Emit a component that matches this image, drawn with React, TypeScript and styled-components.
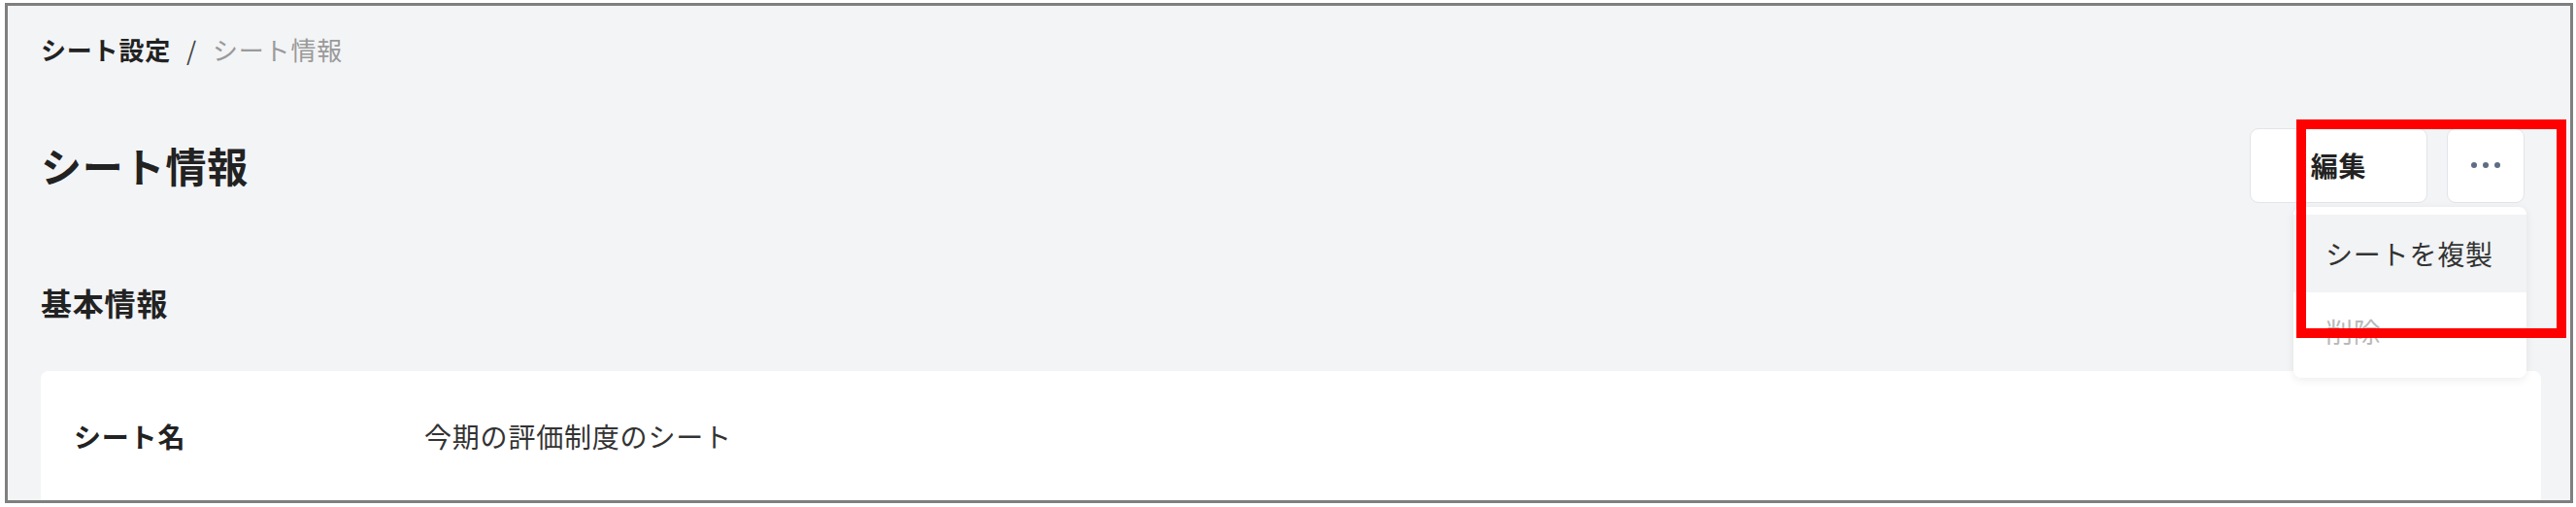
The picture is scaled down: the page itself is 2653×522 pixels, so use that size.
import React from "react";
import styled, { createGlobalStyle } from "styled-components";

type Field = {
  label: string;
  value: string;
};

type MenuItem = {
  title: string;
  disabled?: boolean;
};

const fields: Field[] = [{ label: "シート名", value: "今期の評価制度のシート" }];

const menu: MenuItem[] = [
  { title: "シートを複製" },
  { title: "削除", disabled: true },
];

const App = () => {
  return (
    <>
      <GlobalStyle />
      <Frame>
        <Page>
          <Breadcrumb>
            <Crumb>シート設定</Crumb>
            <Separator>/</Separator>
            <Crumb current>シート情報</Crumb>
          </Breadcrumb>

          <Header>
            <Title>シート情報</Title>
            <Actions>
              <Button wide>編集</Button>
              <Button>
                <Dot />
                <Dot />
                <Dot />
              </Button>
              <Menu>
                {menu.map((el, i) => (
                  <MenuRow key={i} active={i === 0} disabled={el.disabled}>
                    {el.title}
                  </MenuRow>
                ))}
              </Menu>
              <Highlight />
            </Actions>
          </Header>

          <SectionTitle>基本情報</SectionTitle>

          <Card>
            {fields.map((el, i) => (
              <Row key={i}>
                <Label>{el.label}</Label>
                <Value>{el.value}</Value>
              </Row>
            ))}
          </Card>
        </Page>
      </Frame>
    </>
  );
};

export default App;

const GlobalStyle = createGlobalStyle`
  html, body {
    margin: 0;
    padding: 0;
    background: #fff;
  }
  body {
    font-family: "Noto Sans CJK JP", "Noto Sans", sans-serif;
    color: #222;
    letter-spacing: 0.05em;
  }
  * {
    box-sizing: border-box;
  }
`;

const Frame = styled.div`
  margin: 3px 3px 4px 5px;
  height: 515px;
  border: 3px solid #7f7f7f;
  background: #f3f4f6;
  overflow: hidden;
`;

const Page = styled.div`
  padding: 27px 30px 0 34px;
`;

const Breadcrumb = styled.nav`
  display: flex;
  align-items: center;
  gap: 16px;
  height: 36px;
  font-size: 26px;
  line-height: 36px;
`;

const Crumb = styled.span<{ current?: boolean }>`
  font-weight: ${({ current }) => (current ? 400 : 700)};
  color: ${({ current }) => (current ? "#9a9a9a" : "#222")};
`;

const Separator = styled.span`
  color: #444;
`;

const Header = styled.div`
  display: flex;
  align-items: center;
  justify-content: space-between;
  height: 78px;
  margin-top: 62px;
`;

const Title = styled.h1`
  margin: 0;
  font-size: 42px;
  line-height: 56px;
  font-weight: 700;
  color: #222;
`;

const Actions = styled.div`
  position: relative;
  display: flex;
  gap: 20px;
  margin-right: 17px;
`;

const Button = styled.button<{ wide?: boolean }>`
  display: flex;
  align-items: center;
  justify-content: center;
  gap: 6px;
  width: ${({ wide }) => (wide ? "183px" : "80px")};
  height: 77px;
  padding: 0;
  border: 1.5px solid #e1e4e9;
  border-radius: 9px;
  background: #fff;
  font-family: inherit;
  font-size: 28px;
  font-weight: 700;
  letter-spacing: inherit;
  color: #222;
`;

const Dot = styled.span`
  width: 6px;
  height: 6px;
  border-radius: 50%;
  background: #5d6d84;
`;

const Menu = styled.div`
  position: absolute;
  top: calc(100% + 4px);
  right: -2px;
  width: 240px;
  padding: 8px 0;
  background: #fff;
  border-radius: 8px;
  box-shadow: 0 2px 10px rgba(0, 0, 0, 0.08);
  z-index: 1;
`;

const MenuRow = styled.div<{ active?: boolean; disabled?: boolean }>`
  display: flex;
  align-items: center;
  height: 80px;
  padding-left: 33px;
  font-size: 28px;
  background: ${({ active }) => (active ? "#f2f3f5" : "#fff")};
  color: ${({ disabled }) => (disabled ? "#b9b9b9" : "#333")};
`;

const Highlight = styled.div`
  position: absolute;
  top: -9px;
  right: -43px;
  width: 278px;
  height: 225px;
  border: 10px solid #ff0000;
  z-index: 2;
  pointer-events: none;
`;

const SectionTitle = styled.h2`
  margin: 82px 0 0;
  font-size: 32px;
  line-height: 40px;
  font-weight: 700;
  color: #222;
`;

const Card = styled.div`
  margin-top: 51px;
  padding: 47px 34px 60px;
  background: #fff;
  border-radius: 8px;
`;

const Row = styled.div`
  display: grid;
  grid-template-columns: 361px 1fr;
  align-items: center;
  height: 40px;
`;

const Label = styled.div`
  font-size: 28px;
  font-weight: 700;
  color: #222;
`;

const Value = styled.div`
  font-size: 28px;
  color: #333;
`;
